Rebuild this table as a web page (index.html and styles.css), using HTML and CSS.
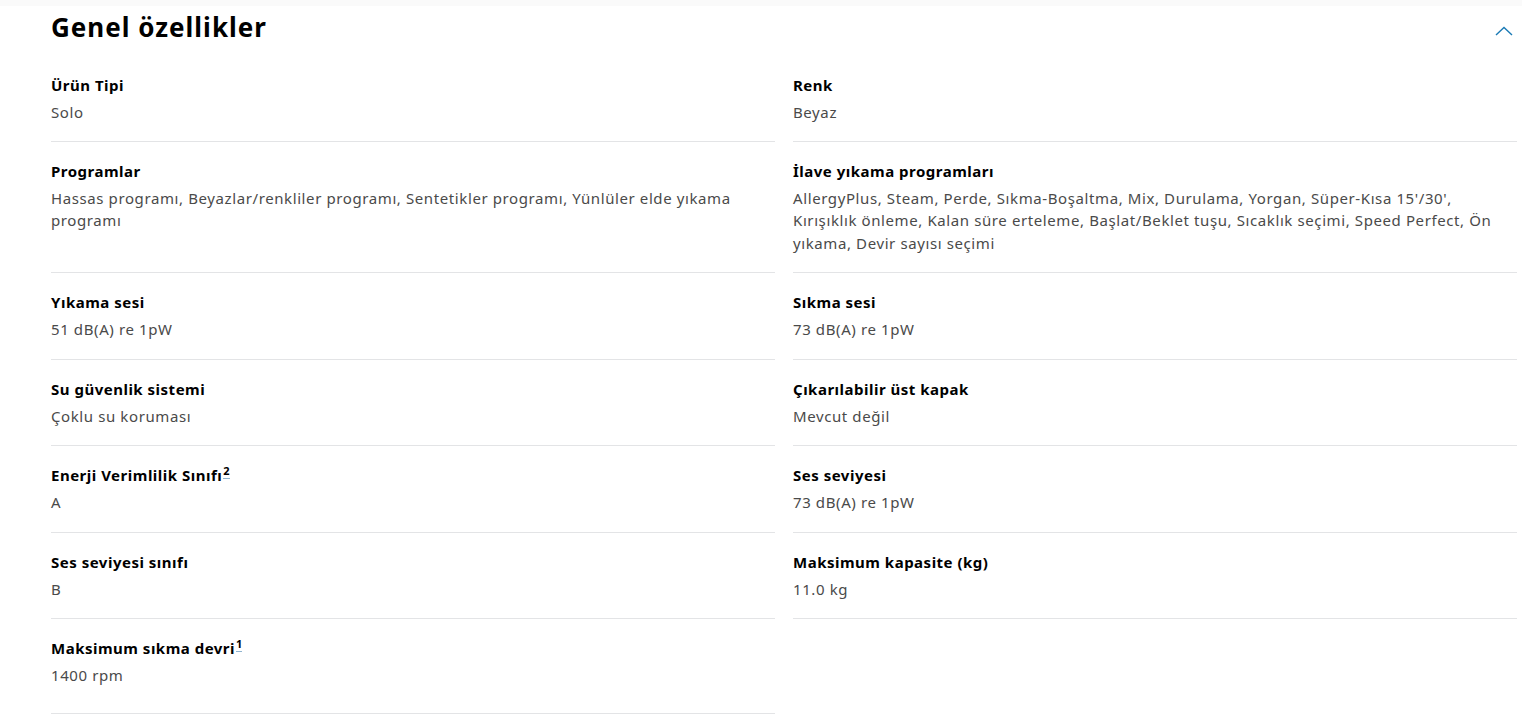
FILE: index.html
```html
<!DOCTYPE html>
<html lang="tr">
<head>
<meta charset="utf-8">
<link rel="stylesheet" href="styles.css">
</head>
<body>

<div class="top-strip"></div>

<section class="spec-section">
  <div class="spec-header">
    <h2 class="spec-title">Genel özellikler</h2>
    <button class="toggle-button" aria-label="Kapat">
      <svg width="18" height="10" viewBox="0 0 18 10"><polyline points="1,9 9,1.5 17,9" fill="none" stroke="#1a7ab5" stroke-width="1.4"/></svg>
    </button>
  </div>

  <div class="spec-grid">
    <div class="spec-item">
      <div class="spec-label">Ürün Tipi</div>
      <div class="spec-value">Solo</div>
    </div>
    <div class="spec-item">
      <div class="spec-label">Renk</div>
      <div class="spec-value">Beyaz</div>
    </div>

    <div class="spec-item">
      <div class="spec-label">Programlar</div>
      <div class="spec-value">Hassas programı, Beyazlar/renkliler programı, Sentetikler programı, Yünlüler elde yıkama programı</div>
    </div>
    <div class="spec-item">
      <div class="spec-label">İlave yıkama programları</div>
      <div class="spec-value">AllergyPlus, Steam, Perde, Sıkma-Boşaltma, Mix, Durulama, Yorgan, Süper-Kısa 15'/30', Kırışıklık önleme, Kalan süre erteleme, Başlat/Beklet tuşu, Sıcaklık seçimi, Speed Perfect, Ön yıkama, Devir sayısı seçimi</div>
    </div>

    <div class="spec-item">
      <div class="spec-label">Yıkama sesi</div>
      <div class="spec-value">51 dB(A) re 1pW</div>
    </div>
    <div class="spec-item">
      <div class="spec-label">Sıkma sesi</div>
      <div class="spec-value">73 dB(A) re 1pW</div>
    </div>

    <div class="spec-item">
      <div class="spec-label">Su güvenlik sistemi</div>
      <div class="spec-value">Çoklu su koruması</div>
    </div>
    <div class="spec-item">
      <div class="spec-label">Çıkarılabilir üst kapak</div>
      <div class="spec-value">Mevcut değil</div>
    </div>

    <div class="spec-item">
      <div class="spec-label">Enerji Verimlilik Sınıfı<sup class="footnote">2</sup></div>
      <div class="spec-value">A</div>
    </div>
    <div class="spec-item">
      <div class="spec-label">Ses seviyesi</div>
      <div class="spec-value">73 dB(A) re 1pW</div>
    </div>

    <div class="spec-item">
      <div class="spec-label">Ses seviyesi sınıfı</div>
      <div class="spec-value">B</div>
    </div>
    <div class="spec-item">
      <div class="spec-label">Maksimum kapasite (kg)</div>
      <div class="spec-value">11.0 kg</div>
    </div>

    <div class="spec-item last">
      <div class="spec-label">Maksimum sıkma devri<sup class="footnote">1</sup></div>
      <div class="spec-value">1400 rpm</div>
    </div>
  </div>
</section>

</body>
</html>
```

FILE: styles.css
```css
body {
  margin: 0;
  background: #fff;
  font-family: "Noto Sans", "Liberation Sans", sans-serif;
  color: #000;
}

.top-strip {
  height: 6px;
  background-color: #fafafa;
}

.spec-section {
  padding: 0 5px 0 51px;
}

.spec-header {
  display: flex;
  justify-content: space-between;
  align-items: center;
  height: 49.5px;
}

.spec-title {
  margin: 0 0 7px;
  font-size: 26px;
  font-weight: 700;
  letter-spacing: 1px;
}

.toggle-button {
  background: none;
  border: none;
  padding: 0;
  margin-right: 4px;
  cursor: pointer;
  line-height: 0;
}

.spec-grid {
  display: grid;
  grid-template-columns: 1fr 1fr;
  column-gap: 18px;
}

.spec-item {
  padding: 18px 0 18.25px;
  border-bottom: 1px solid #e3e4e6;
}

.spec-item.last {
  padding-bottom: 27px;
}

.spec-label {
  font-size: 15px;
  font-weight: 700;
  line-height: 22px;
  letter-spacing: 0.5px;
}

.spec-value {
  margin-top: 5px;
  font-size: 15px;
  line-height: 22.25px;
  letter-spacing: 0.6px;
  color: #4a4a4a;
}

.footnote {
  font-size: 11px;
  line-height: 0;
  letter-spacing: 0;
  border-bottom: 1px solid #8fb3cf;
  margin-left: 1px;
}
```
